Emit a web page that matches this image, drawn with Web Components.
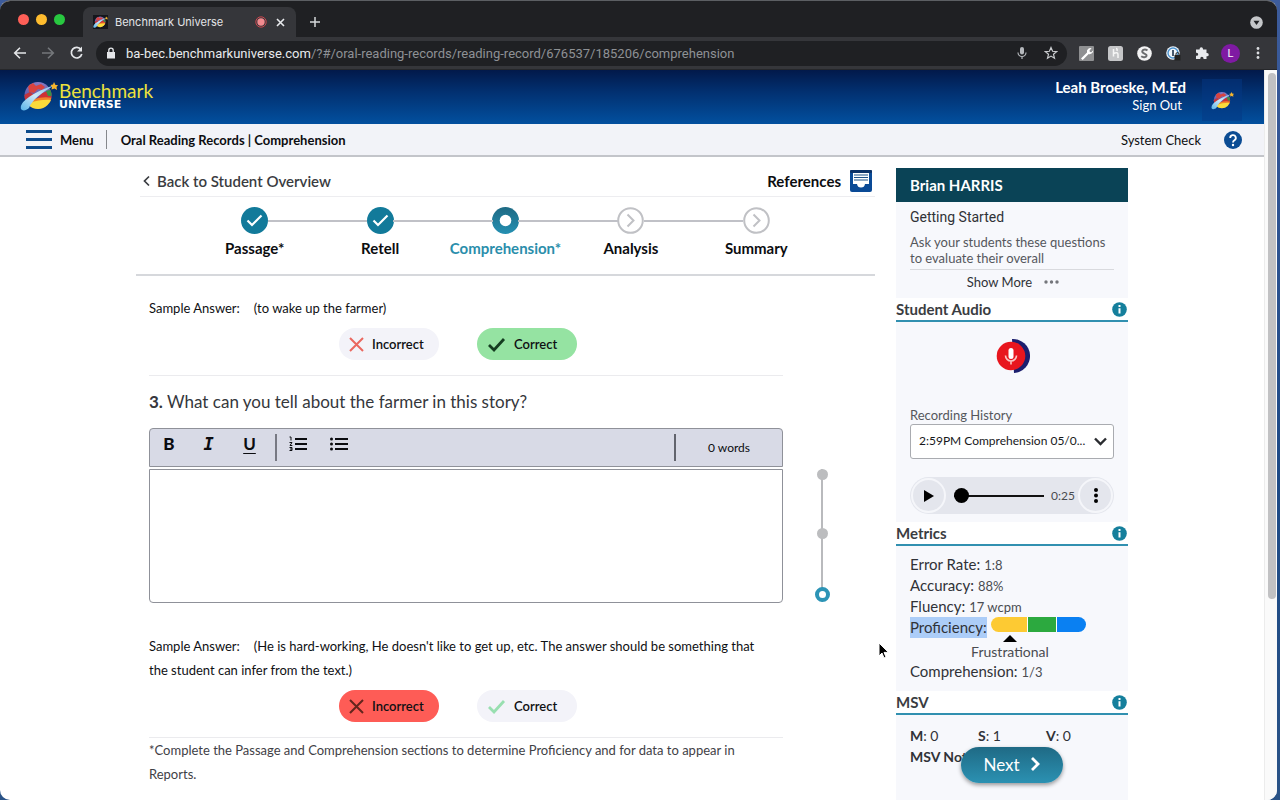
<!DOCTYPE html>
<html lang="en">
<head>
<meta charset="utf-8">
<meta name="viewport" content="width=device-width, initial-scale=1">
<title>Benchmark Universe</title>
<style>
  html, body { margin: 0; height: 100%; }
  body {
    background: linear-gradient(#3d5c9c, #1d4a86 60%, #2a5387);
    font-family: Lato, sans-serif;
    font-size: 13px;
    color: #1c1d21;
    overflow: hidden;
  }
</style>
</head>
<body>
<browser-window>
  <browser-tabs slot="chrome"></browser-tabs>
  <browser-toolbar slot="chrome"></browser-toolbar>
  <site-header></site-header>
  <menu-bar></menu-bar>
  <record-page>
    <back-bar></back-bar>
    <progress-steps></progress-steps>
    <question-list>
      <sample-answer mark="correct">(to wake up the farmer)</sample-answer>
      <question-title number="3.">What can you tell about the farmer in this story?</question-title>
      <rich-editor></rich-editor>
      <sample-answer mark="incorrect">(He is hard-working, He doesn't like to get up, etc. The answer should be something that the student can infer from the text.)</sample-answer>
      <foot-note>*Complete the Passage and Comprehension sections to determine Proficiency and for data to appear in Reports.</foot-note>
      <question-rail slot="rail"></question-rail>
    </question-list>
    <student-panel slot="side" name="Brian HARRIS">
      <getting-started></getting-started>
      <panel-section heading="Student Audio"><student-audio></student-audio></panel-section>
      <panel-section heading="Metrics"><metric-list></metric-list></panel-section>
      <panel-section heading="MSV"><msv-summary></msv-summary></panel-section>
    </student-panel>
  </record-page>
</browser-window>

<script>
const base = `
  *, *::before, *::after { box-sizing: border-box; }
  :host { display: block; }
  svg { display: block; flex: none; }
  button { font: inherit; color: inherit; border: 0; padding: 0; margin: 0; background: none; cursor: pointer; }
  a { color: inherit; text-decoration: none; }
  p, h1, h2, h3, ul, ol, dl, dd { margin: 0; padding: 0; list-style: none; }
`;

function define(name, css, html) {
  customElements.define(name, class extends HTMLElement {
    constructor() {
      super();
      const root = this.attachShadow({ mode: 'open' });
      const markup = typeof html === 'function' ? html(this) : html;
      root.innerHTML = `<style>${base}${css}</style>${markup}`;
    }
  });
}

/* ---------- shared drawing ---------- */

define('planet-logo', `
  :host { width: 38px; height: 30px; }
  svg { width: 100%; height: 100%; }
`, `
  <svg viewBox="0 0 38 30" aria-hidden="true">
    <defs>
      <clipPath id="c"><circle cx="18" cy="14.500" r="13.500"/></clipPath>
      <linearGradient id="p" x2="0" y2="1"><stop stop-color="#8a7cc4"/><stop offset="1" stop-color="#3b3a8e"/></linearGradient>
      <linearGradient id="r" x1="0" y1="1" x2="1" y2="0">
        <stop offset="0" stop-color="#58b4ea"/><stop offset=".5" stop-color="#cfe8f8"/><stop offset="1" stop-color="#7dbbe6"/>
      </linearGradient>
    </defs>
    <g clip-path="url(#c)">
      <rect width="38" height="30" fill="url(#p)"/>
      <path d="M8 4 13 2 16 5 21 3 25 6 22 9 18 8 14 12 9 11Z" fill="#d8433f"/>
      <path d="M4 14 10 11 14 14 8 19 4 19Z" fill="#c3343c"/>
      <path d="M22 12 32 9V19L16 19Z" fill="#cf3034"/>
      <path d="M26 10 33 8V15L28 15Z" fill="#37934a"/>
      <path d="M14 18Q24 15 33 17V21L10 24Z" fill="#f08329"/>
      <path d="M10 22Q20 18 33 19V30H8Z" fill="#fbdb3a"/>
    </g>
    <path d="M1 28C-1 21 13 11 35 4 21 12 12 19 9 27 6 30 2 30 1 28Z" fill="url(#r)"/>
    <path d="M34 1 35.500 4 38 4 36.500 6 37 9 34.500 7.500 31.500 8.500 32 6 30.500 4 33 3.500Z" fill="#f5b52c"/>
  </svg>`);

define('info-button', `
  :host { width: 15px; height: 15px; }
  button { display: block; }
`, `
  <button type="button" aria-label="More information">
    <svg width="15" height="15" viewBox="0 0 15 15"><circle cx="7.5" cy="7.5" r="7.3" fill="#157f9c"/>
    <path d="M7.500 3v2M7.500 6.300V11.500" stroke="#fff" stroke-width="2" fill="none"/></svg>
  </button>`);

/* ---------- browser frame ---------- */

define('browser-window', `
  :host { height: 100vh; padding-right: 3px; }
  .frame { position: relative; display: flex; flex-direction: column; height: 100%; overflow: hidden;
    border-radius: 10px; border-top: 1px solid #5c5f63; background: #fff; }
  .view { flex: 1; min-height: 0; display: flex; }
  .doc { flex: 1; min-width: 0; overflow: hidden; }
  .bar { width: 13px; border-left: 1px solid #ececec; background: #fafafa; padding: 3px 2px; }
  .thumb { width: 8px; height: 82%; max-height: 526px; border-radius: 4px; background: #c1c1c3; margin-left: 1px; }
  .pointer { position: absolute; left: 69%; top: 641px; margin-left: -3px; }
`, `
  <div class="frame">
    <slot name="chrome"></slot>
    <div class="view">
      <div class="doc"><slot></slot></div>
      <div class="bar"><div class="thumb"></div></div>
    </div>
    <svg class="pointer" width="12" height="18" viewBox="0 0 12 18" aria-hidden="true">
      <path d="M1 1v13l3-3 2 5 2-1-2-4.600h4.500Z" fill="#000" stroke="#fff" stroke-width="1"/></svg>
  </div>`);

define('browser-tabs', `
  :host { background: #1f2023; color: #e4e5e8; font-family: Inter, sans-serif; }
  .strip { display: flex; align-items: flex-end; height: 36px; padding: 0 15px 0 18px; }
  .lights { display: flex; gap: 7px; align-self: center; margin-right: 18px; }
  .lights i { width: 11px; height: 11px; border-radius: 50%; }
  .tab { display: flex; align-items: center; width: 213px; height: 30px; padding: 0 9px 0 10px;
    border-radius: 8px 8px 0 0; background: #35363a; font-size: 11px; }
  .tab planet-logo { width: 15px; height: 14px; background: #14161c; margin-right: 7px; }
  .tab span { flex: 1; white-space: nowrap; }
  .tab svg + button { margin-left: 7px; }
  .add { align-self: center; margin: 6px 0 0 12px; }
  .more { align-self: center; margin: 6px -1px 0 auto; }
`, `
  <div class="strip">
    <div class="lights"><i style="background:#fe5f57"></i><i style="background:#febc2e"></i><i style="background:#28c840"></i></div>
    <div class="tab">
      <planet-logo></planet-logo>
      <span>Benchmark Universe</span>
      <svg width="12" height="12" viewBox="0 0 12 12"><circle cx="6" cy="6" r="5.200" fill="none" stroke="#c9484f"/><circle cx="6" cy="6" r="3.700" fill="#f28b8f"/></svg>
      <button type="button" aria-label="Close tab"><svg width="13" height="13" viewBox="0 0 13 13"><path d="m3 3 7 7m0-7-7 7" stroke="#e8eaed" stroke-width="1.600"/></svg></button>
    </div>
    <button class="add" type="button" aria-label="New tab"><svg width="14" height="14" viewBox="0 0 14 14"><path d="M7 2v10M2 7h10" stroke="#d5d7da" stroke-width="1.500"/></svg></button>
    <button class="more" type="button" aria-label="Search tabs"><svg width="13" height="13" viewBox="0 0 13 13"><circle cx="6.500" cy="6.500" r="6.300" fill="#c4c6c9"/><path d="M3.500 4.800h6L6.500 9Z" fill="#1f2023"/></svg></button>
  </div>`);

define('browser-toolbar', `
  :host { background: #35363a; font-family: Roboto, sans-serif; }
  .row { display: flex; align-items: center; height: 33px; padding: 0 17px 0 12px; border-bottom: 1px solid #26272a; }
  .nav { display: flex; gap: 12px; margin-right: 11px; }
  .omni { flex: 1; min-width: 0; display: flex; align-items: center; height: 25px; border-radius: 13px; background: #1f2023; padding: 0 9px; }
  .url { flex: 1; color: #8e9195; font-size: 13px; padding-left: 9px; white-space: nowrap; overflow: hidden; }
  .url b { font-weight: 400; color: #e8eaed; }
  .omni button + button { margin-left: 16px; }
  .ext { display: flex; align-items: center; gap: 14px; margin-left: 12px; }
  .me { width: 19px; height: 19px; border-radius: 50%; background: #7f1aa3; color: #fff; font-size: 11px; line-height: 19px; text-align: center; margin: 0 -2px; }
  .dots { margin: 0 -5px 0 -1px; }
`, `
  <div class="row">
    <div class="nav">
      <button type="button" aria-label="Back"><svg width="16" height="16" viewBox="0 0 16 16" fill="none" stroke="#e4e6e9" stroke-width="1.600"><path d="M14 8H3M8 2.700 2.700 8 8 13.300"/></svg></button>
      <button type="button" aria-label="Forward"><svg width="16" height="16" viewBox="0 0 16 16" fill="none" stroke="#74777b" stroke-width="1.600"><path d="M2 8h11M8 2.700 13.300 8 8 13.300"/></svg></button>
      <button type="button" aria-label="Reload"><svg width="17" height="16" viewBox="0 0 17 16" fill="none" stroke="#e4e6e9" stroke-width="1.700"><path d="M13 4.600A5.300 5.300 0 1 0 13.800 9"/><path d="M14 1.500v5H9Z" fill="#e4e6e9" stroke="none"/></svg></button>
    </div>
    <div class="omni">
      <svg width="12" height="12" viewBox="0 0 12 12"><path d="M2 5h8v6.500H2Z" fill="#e4e6e9"/><path d="M3.800 5V3.300a2.200 2.200 0 0 1 4.400 0V5" fill="none" stroke="#e4e6e9" stroke-width="1.300"/></svg>
      <div class="url"><b>ba-bec.benchmarkuniverse.com</b>/?#/oral-reading-records/reading-record/676537/185206/comprehension</div>
      <button type="button" aria-label="Voice"><svg width="12" height="14" viewBox="0 0 12 14"><rect x="4" y="1" width="4" height="7.500" rx="2" fill="#b5b8bc"/><path d="M2 6.500a4 4 0 0 0 8 0M6 10.500V13" fill="none" stroke="#b5b8bc" stroke-width="1.200"/></svg></button>
      <button type="button" aria-label="Bookmark"><svg width="14" height="14" viewBox="0 0 14 14"><path d="m7 1.500 1.600 3.800 4 .3-3.100 2.700 1 4L7 10.100l-3.500 2.200 1-4L1.400 5.600l4-.3Z" fill="none" stroke="#c9cbce" stroke-width="1.200"/></svg></button>
    </div>
    <div class="ext">
      <svg width="15" height="15" viewBox="0 0 15 15"><rect width="15" height="15" rx="1" fill="#8f9092"/><path d="m2 12.500 6-6a3.500 3.500 0 0 1 4.600-4.200L10.500 4.500l.4 1.400 1.500.3 1.800-1.900A3.500 3.500 0 0 1 9.700 8l-6 6Z" fill="#fff"/></svg>
      <svg width="15" height="15" viewBox="0 0 15 15"><rect width="15" height="15" rx="2.500" fill="#c5c6c8"/><path d="M5.500 3v7.500M5.500 7.500q4.500-2 4.500 1V12M8 2.500q1.500 0 1 2.500" fill="none" stroke="#f6f6f6" stroke-width="1.500"/></svg>
      <svg width="15" height="15" viewBox="0 0 15 15"><circle cx="7.500" cy="7.500" r="7.300" fill="#f3f3f4"/><path d="M10.500 4.300C7 2.500 4.500 4.500 5.500 6.300S10 8 9.600 9.700 6 11.700 4.200 10.300" fill="none" stroke="#6b6c6f" stroke-width="2"/></svg>
      <svg width="15" height="15" viewBox="0 0 15 15"><circle cx="7" cy="7" r="6.800" fill="#f0f5fa"/><circle cx="7" cy="7" r="5" fill="none" stroke="#4b93cf" stroke-width="1.400"/><path d="M7 4v6" stroke="#33475c" stroke-width="1.800"/><rect x="8.500" y="9" width="6" height="5.500" fill="#222"/><path d="M10 9V8a1.500 1.500 0 0 1 3 0v1" fill="none" stroke="#222"/></svg>
      <svg width="14" height="14" viewBox="0 0 14 14"><path d="M1 3.500h3.600V3a1.700 1.700 0 0 1 3.400 0v.5h3.500V7h.6a1.600 1.600 0 0 1 0 3.300h-.6V13H8.500v-.7a1.600 1.600 0 0 0-3.200 0v.7H1V9.700h.7a1.500 1.500 0 0 0 0-3H1Z" fill="#e8eaed"/></svg>
      <span class="me">L</span>
      <button class="dots" type="button" aria-label="Browser menu"><svg width="14" height="14" viewBox="0 0 14 14" fill="#dcdee1"><circle cx="7" cy="2.500" r="1.400"/><circle cx="7" cy="7" r="1.400"/><circle cx="7" cy="11.500" r="1.400"/></svg></button>
    </div>
  </div>`);

/* ---------- site header ---------- */

define('site-header', `
  :host { background: linear-gradient(#02194a, #023070 40%, #02509f); color: #fff; }
  .row { display: flex; align-items: center; height: 54px; padding: 0 22px 3px 20px; }
  .brand { display: flex; align-items: center; gap: 1px; }
  .name { font-size: 19px; line-height: 18px; color: #ece13c; }
  .sub { font: bold 11px/9px "DejaVu Sans", sans-serif; color: #fff; }
  .who { margin-left: auto; text-align: right; line-height: 18px; }
  .who strong { display: block; font-size: 15px; }
  .who a { margin-right: 4px; }
  .avatar { display: flex; align-items: center; justify-content: center; align-self: flex-end; width: 40px; height: 42px; background: #03388480; margin-left: 16px; }
  .avatar planet-logo { width: 23px; height: 19px; }
`, `
  <header class="row">
    <a class="brand" href="#" aria-label="Benchmark Universe home">
      <planet-logo></planet-logo>
      <div><div class="name">Benchmark</div><div class="sub">UNIVERSE</div></div>
    </a>
    <div class="who"><strong>Leah Broeske, M.Ed</strong><a href="#">Sign Out</a></div>
    <div class="avatar"><planet-logo></planet-logo></div>
  </header>`);

define('menu-bar', `
  :host { background: #f2f3f8; border-bottom: 2px solid #c3c5ca; color: #0c0d10; }
  .row { display: flex; align-items: center; height: 31px; padding: 0 22px 0 26px; }
  .menu { display: flex; align-items: center; gap: 8px; font-weight: 700; padding-right: 12px; border-right: 1px solid #85878c; line-height: 18px; }
  h1 { font-size: 13px; margin-left: 14px; }
  .check { margin-left: auto; margin-right: 23px; }
`, `
  <nav class="row">
    <button class="menu" type="button">
      <svg width="26" height="19" viewBox="0 0 26 19" fill="#0c4a8b"><rect width="26" height="3" y="0"/><rect width="26" height="3" y="8"/><rect width="26" height="3" y="16"/></svg>
      Menu
    </button>
    <h1>Oral Reading Records | Comprehension</h1>
    <a class="check" href="#">System Check</a>
    <button type="button" aria-label="Help"><svg width="18" height="18" viewBox="0 0 18 18"><circle cx="9" cy="9" r="9" fill="#0b4c94"/><path d="M6.200 7a2.800 2.800 0 1 1 4.200 2.300Q9 10.100 9 11.500" fill="none" stroke="#fff" stroke-width="1.800"/><circle cx="9" cy="14" r="1.200" fill="#fff"/></svg></button>
  </nav>`);

/* ---------- page layout ---------- */

define('record-page', `
  .grid { display: grid; grid-template-columns: minmax(0, 1fr) 232px; gap: 21px; max-width: 992px; margin: 0 auto; padding-top: 10px; }
`, `
  <div class="grid">
    <main><slot></slot></main>
    <aside><slot name="side"></slot></aside>
  </div>`);

define('back-bar', `
  .row { display: flex; justify-content: space-between; align-items: center; height: 30px; margin-left: 4px; padding: 0 2px 2px; border-bottom: 1px solid #ededf0; }
  a, button { display: flex; align-items: center; gap: 8px; font-size: 15px; font-weight: 600; }
  a { color: #3a3c41; gap: 6px; }
  button { color: #0c0d10; font-weight: 700; }
`, `
  <div class="row">
    <a href="#"><svg width="9" height="12" viewBox="0 0 9 12"><path d="M7 1.500 2.500 6 7 10.500" fill="none" stroke="#3a3c41" stroke-width="1.700"/></svg>Back to Student Overview</a>
    <button type="button">References
      <svg width="24" height="24" viewBox="0 0 24 24"><rect x="1" y="1" width="22" height="22" rx="2" fill="#0a4a96"/><rect x="1" y="1" width="22" height="3" rx="1" fill="#0c3267"/><path d="M4 4h16v11h-4q-.5 3.500-4 3.500T8 15H4Z" fill="#fff"/><path d="M5 6h14M5 8.500h14M5 11h14" stroke="#1f5288" stroke-width="1.200"/></svg>
    </button>
  </div>`);

define('progress-steps', `
  ol { display: grid; grid-template-columns: repeat(5, 1fr); padding: 10px 56px 16px; border-bottom: 2px solid #d6d8dc; }
  li { position: relative; display: flex; flex-direction: column; align-items: center; gap: 4px; font-size: 15px; font-weight: 700; line-height: 20px; color: #0c0d10; }
  li + li::before { content: ""; position: absolute; top: 13px; right: calc(50% + 13px); width: calc(100% - 26px); height: 2px; background: #c0c1c7; }
  .now { color: #2a8eab; }
`, () => {
  const done = `<svg width="27" height="27" viewBox="0 0 27 27"><circle cx="13.500" cy="13.500" r="13.500" fill="#127a9a"/><path d="m6.500 13.500 4.500 4.500 9.500-9.500" fill="none" stroke="#fff" stroke-width="2.200"/></svg>`;
  const now = `<svg width="27" height="27" viewBox="0 0 27 27"><defs><linearGradient id="g" x2="0" y2="1"><stop stop-color="#1e6a84"/><stop offset="1" stop-color="#2590b2"/></linearGradient></defs><circle cx="13.500" cy="13.500" r="13.500" fill="url(#g)"/><circle cx="13.500" cy="13.500" r="5.800" fill="#fff"/></svg>`;
  const next = `<svg width="27" height="27" viewBox="0 0 27 27" fill="none" stroke="#c0c1c5" stroke-width="2"><circle cx="13.500" cy="13.500" r="12.300" fill="#fff"/><path d="m10.500 7.500 6 6-6 6"/></svg>`;
  return `<ol><li>${done}Passage*</li><li>${done}Retell</li><li class="now" aria-current="step">${now}Comprehension*</li><li>${next}Analysis</li><li>${next}Summary</li></ol>`;
});

define('question-list', `
  .grid { display: grid; grid-template-columns: minmax(0, 1fr) 78px; padding: 20px 14px 0 13px; }
`, `<div class="grid"><div><slot></slot></div><slot name="rail"></slot></div>`);

define('sample-answer', `
  :host { border-bottom: 1px solid #ebebee; padding-bottom: 15px; color: #0f1013; }
  p { line-height: 24px; padding-right: 14px; }
  .lead { margin-right: 14px; }
  .marks { display: flex; justify-content: center; gap: 38px; padding: 8px 0 0; margin-left: -16px; }
  label { display: flex; align-items: center; gap: 8px; width: 100px; height: 32px; padding-left: 10px; border-radius: 16px; background: #f3f3f9; font-weight: 600; cursor: pointer; }
  input { position: absolute; opacity: 0; width: 1px; height: 1px; margin: 0; }
  .wrong { --ink: #ea675f; }
  .right { --ink: #98dfb0; }
  .wrong:has(:checked) { background: #fe5c56; --ink: #63251d; }
  .right:has(:checked) { background: #95e3a2; --ink: #143d20; }
`, el => {
  const mark = el.getAttribute('mark');
  return `
  <p><span class="lead">Sample Answer:</span><slot></slot></p>
  <div class="marks" role="radiogroup" aria-label="Mark">
    <label class="wrong"><input type="radio" name="mark" ${mark === 'incorrect' ? 'checked' : ''}>
      <svg width="15" height="15" viewBox="0 0 15 15"><path d="m1 1 13 13m0-13L1 14" stroke="var(--ink)" stroke-width="2"/></svg>Incorrect</label>
    <label class="right"><input type="radio" name="mark" ${mark === 'correct' ? 'checked' : ''}>
      <svg width="19" height="15" viewBox="0 0 19 15"><path d="m2 8 5 5L17 2" fill="none" stroke="var(--ink)" stroke-width="2.800"/></svg>Correct</label>
  </div>`;
});

define('question-title', `
  h2 { padding: 16px 0; font-size: 17px; font-weight: 400; line-height: 20px; color: #35373c; }
`, el => `<h2><b>${el.getAttribute('number')}</b> <slot></slot></h2>`);

define('rich-editor', `
  :host { margin-bottom: 31px; }
  .tools { display: flex; align-items: center; height: 39px; padding: 5px 0; border: 1px solid #8f9199; border-radius: 4px 4px 0 0; background: #d8dae6; color: #0b0c10; }
  .tools button { width: 41px; height: 18px; margin-bottom: 8px; display: flex; align-items: center; justify-content: center; }
  .tools button:first-child { width: 38px; }
  .b { font: 900 17px/18px Lato, sans-serif; }
  .i { font: italic bold 17px/18px "DejaVu Sans Mono", monospace; }
  .u { font-size: 17px; font-weight: 700; text-decoration: underline; text-underline-offset: 3px; }
  .rule { width: 2px; height: 27px; background: #777983; margin-left: 5px; }
  .count { margin-left: auto; width: 108px; line-height: 27px; border-left: 2px solid #62646d; text-align: center; font-size: 12px; }
  textarea { display: block; width: 100%; height: 134px; margin: 2px 0 0; padding: 8px; border: 1px solid #8f9199; border-radius: 0 0 4px 4px; font: inherit; resize: none; outline: none; background: #fff; }
`, `
  <div class="tools" role="toolbar" aria-label="Text format">
    <button class="b" type="button" aria-label="Bold">B</button>
    <button class="i" type="button" aria-label="Italic">I</button>
    <button class="u" type="button" aria-label="Underline">U</button>
    <span class="rule"></span>
    <button type="button" aria-label="Numbered list"><svg width="18" height="16" viewBox="0 0 18 16" fill="none" stroke="#0b0c10"><path d="M6 3h12M6 8h12M6 13h12" stroke-width="2"/><path d="M.500 1h1.500v3.500M.500 6.500H3L1 9.500h2.300M.500 11.500H3V14.500H.500M1 13h2" stroke-width="1"/></svg></button>
    <button type="button" aria-label="Bullet list"><svg width="18" height="16" viewBox="0 0 18 16"><path d="M5 3h13M5 8h13M5 13h13" stroke="#0b0c10" stroke-width="2"/><g fill="#0b0c10"><circle cx="1.500" cy="3" r="1.500"/><circle cx="1.500" cy="8" r="1.500"/><circle cx="1.500" cy="13" r="1.500"/></g></svg></button>
    <span class="count">0 words</span>
  </div>
  <textarea aria-label="Answer"></textarea>`);

define('foot-note', `p { line-height: 24px; color: #3f4146; }`, `<p><slot></slot></p>`);

define('question-rail', `
  ol { display: flex; flex-direction: column; align-items: center; justify-content: space-between; width: 15px; height: 133px; margin: 173px auto 0; background: linear-gradient(#b9babd, #b9babd) center / 2px 100% no-repeat; }
  a { display: block; width: 11px; height: 11px; border-radius: 50%; background: #bcbdbf; }
  .now { width: 15px; height: 15px; background: #fff; border: 4px solid #2c94b6; }
`, `<ol><li><a href="#" aria-label="Question 1"></a></li><li><a href="#" aria-label="Question 2"></a></li><li><a class="now" href="#" aria-label="Question 3"></a></li></ol>`);

/* ---------- student panel ---------- */

define('student-panel', `
  :host { position: relative; margin-top: 1px; background: #f7f8fc; color: #303237; min-height: 633px; }
  h2 { height: 34px; padding-left: 14px; background: #0a4356; color: #fff; font-size: 15px; line-height: 34px; }
  .next { position: absolute; left: 65px; top: 579px; display: flex; align-items: center; justify-content: center; gap: 10px; width: 102px; height: 36px; padding-bottom: 2px; border-radius: 18px; color: #fff; font-size: 17px;
    background: linear-gradient(#1f6a85, #2b91b2); box-shadow: 0 2px 4px #0006; }
`, el => `
  <h2>${el.getAttribute('name')}</h2>
  <slot></slot>
  <button class="next" type="button">Next <svg width="11" height="16" viewBox="0 0 11 16"><path d="m2 2 6 6-6 6" fill="none" stroke="#fff" stroke-width="2.800"/></svg></button>`);

define('getting-started', `
  :host { padding: 5px 14px 6px; }
  h3 { font-family: Roboto, sans-serif; font-size: 14px; font-weight: 400; line-height: 20px; margin-bottom: 7px; }
  p { line-height: 16px; padding-bottom: 3px; border-bottom: 1px solid #d9dade; color: #55575c; }
  button { display: flex; align-items: center; gap: 12px; margin: 2px auto 0; padding-left: 2px; line-height: 20px; }
`, `
  <h3>Getting Started</h3>
  <p>Ask your students these questions<br>to evaluate their overall</p>
  <button type="button">Show More <svg width="15" height="4" viewBox="0 0 15 4" fill="#74767b"><circle cx="2" cy="2" r="1.700"/><circle cx="7.500" cy="2" r="1.700"/><circle cx="13" cy="2" r="1.700"/></svg></button>`);

define('panel-section', `
  .head { display: flex; align-items: center; justify-content: space-between; height: 24px; padding-right: 1px; border-bottom: 2px solid #3190b0; background: #fff; }
  h3 { font-size: 15px; font-weight: 700; line-height: 20px; color: #3a3c41; }
`, el => `
  <div class="head"><h3>${el.getAttribute('heading')}</h3><info-button></info-button></div>
  <slot></slot>`);

define('student-audio', `
  :host { padding: 16px 14px 8px; }
  .record { display: block; margin: 0 auto 33px; }
  label { display: block; line-height: 17px; color: #55575c; }
  .pick { position: relative; }
  select { appearance: none; display: block; width: 100%; height: 35px; padding: 0 22px 2px 8px; border: 1px solid #a9abb0; border-radius: 3px; background: #fff; font: 12px Lato, sans-serif; color: #17181b; }
  .pick svg { position: absolute; right: 7px; top: 13px; pointer-events: none; }
  .player { display: flex; align-items: center; height: 37px; margin-top: 18px; padding: 0 1px; border-radius: 19px; background: #e4e6ed; }
  .round { display: flex; align-items: center; justify-content: center; width: 35px; height: 35px; border-radius: 50%; border: 2px solid #f5f6fa; flex: none; }
  input { appearance: none; flex: 1; min-width: 0; height: 16px; margin: 0 7px 0 8px; background: linear-gradient(#111, #111) center / 100% 2px no-repeat; }
  input::-webkit-slider-thumb { appearance: none; width: 15px; height: 15px; border-radius: 50%; background: #000; }
  time { color: #4a4c51; font-size: 12px; margin-right: 3px; }
`, `
  <button class="record" type="button" aria-label="Record">
    <svg width="36" height="36" viewBox="0 0 36 36"><path d="M18 1a17 17 0 0 1 2 34l-1-17Z" fill="#1c1f6e"/><circle cx="17" cy="18" r="14.300" fill="#e8161e"/><rect x="14.500" y="10" width="5" height="11" rx="2.500" fill="#fff"/><path d="M11.500 17.500a5.500 5.500 0 0 0 11 0M17 23v3.500" fill="none" stroke="#f9c7c4" stroke-width="1.600"/></svg>
  </button>
  <label for="history">Recording History</label>
  <div class="pick">
    <select id="history"><option>2:59PM Comprehension 05/0...</option></select>
    <svg width="13" height="9" viewBox="0 0 13 9"><path d="m1 1.500 5.500 5.500L12 1.500" fill="none" stroke="#2a2c30" stroke-width="2.400"/></svg>
  </div>
  <div class="player">
    <button class="round" type="button" aria-label="Play"><svg width="11" height="12" viewBox="0 0 11 12"><path d="M1 0v12l10-6Z"/></svg></button>
    <input type="range" min="0" max="25" value="0" aria-label="Position">
    <time>0:25</time>
    <button class="round" type="button" aria-label="Player options"><svg width="4" height="15" viewBox="0 0 4 15"><circle cx="2" cy="2" r="2"/><circle cx="2" cy="7.500" r="2"/><circle cx="2" cy="13" r="2"/></svg></button>
  </div>`);

define('metric-list', `
  :host { padding: 8px 14px 9px; font-size: 15px; line-height: 21px; }
  .row { display: flex; align-items: baseline; gap: 4px; }
  dd { font-size: 13px; line-height: 16px; color: #4a4c51; }
  .picked { background: #accdf8; }
  .scale { align-self: flex-start; width: 95px; }
  .bar { display: grid; grid-template-columns: 36fr 28fr 29fr; gap: 1px; height: 15px; border-radius: 8px; overflow: hidden; background: #fff; }
  .bar i:nth-child(1) { background: #fdca33; }
  .bar i:nth-child(2) { background: #2ca93f; }
  .bar i:nth-child(3) { background: #0a80f2; }
  .scale svg { margin: 3px 0 -4px 12px; }
  .level { margin: 4px 4px 0 0; font-size: 14px; line-height: 19px; text-align: center; color: #4a4c51; }
`, `
  <dl>
    <div class="row"><dt>Error Rate:</dt><dd>1:8</dd></div>
    <div class="row"><dt>Accuracy:</dt><dd>88%</dd></div>
    <div class="row"><dt>Fluency:</dt><dd>17 wcpm</dd></div>
    <div class="row"><dt class="picked">Proficiency:</dt>
      <dd class="scale"><div class="bar"><i></i><i></i><i></i></div><svg width="14" height="7" viewBox="0 0 14 7"><path d="M0 7 7 0l7 7Z"/></svg></dd></div>
    <div class="level">Frustrational</div>
    <div class="row"><dt>Comprehension:</dt><dd>1/3</dd></div>
  </dl>`);

define('msv-summary', `
  :host { padding: 10px 14px; font-size: 14px; line-height: 21px; }
  .scores { display: grid; grid-template-columns: repeat(3, 1fr); }
`, `
  <div class="scores"><span><b>M</b>: 0</span><span><b>S</b>: 1</span><span><b>V</b>: 0</span></div>
  <b>MSV Notes</b>`);
</script>
</body>
</html>
